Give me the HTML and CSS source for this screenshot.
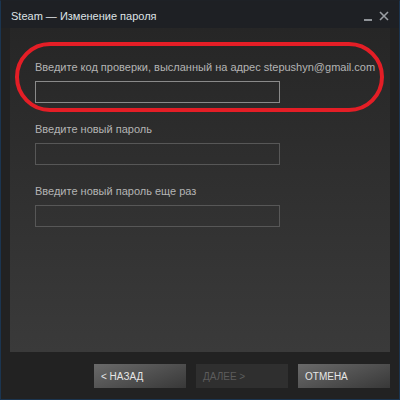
FILE: index.html
```html
<!DOCTYPE html>
<html lang="ru">
<head>
<meta charset="utf-8">
<link rel="stylesheet" href="styles.css">
</head>
<body>
<div class="window">
  <div class="titlebar">
    <span class="title">Steam — Изменение пароля</span>
    <div class="controls">
      <span class="min"></span>
      <svg class="close" width="10" height="10" viewBox="0 0 10 10"><path d="M1 1 L9 9 M9 1 L1 9" stroke="#9a9ea3" stroke-width="1.6"/></svg>
    </div>
  </div>
  <div class="panel">
    <div class="field">
      <div class="label">Введите код проверки, высланный на адрес stepushyn@gmail.com</div>
      <div class="input focus"></div>
    </div>
    <div class="field">
      <div class="label">Введите новый пароль</div>
      <div class="input"></div>
    </div>
    <div class="field">
      <div class="label">Введите новый пароль еще раз</div>
      <div class="input"></div>
    </div>
    <div class="highlight"></div>
  </div>
  <div class="footer">
    <div class="btn">&lt; НАЗАД</div>
    <div class="btn disabled">ДАЛЕЕ &gt;</div>
    <div class="btn">ОТМЕНА</div>
  </div>
</div>
</body>
</html>
```
FILE: styles.css
```css
html, body {
  margin: 0;
  padding: 0;
  background: #222222;
}
.window {
  width: 400px;
  height: 400px;
  box-sizing: border-box;
  border: 1px solid #1b3550;
  border-top-color: #1e2126;
  background: #222222;
  font-family: "Liberation Sans", Arial, sans-serif;
  display: flex;
  flex-direction: column;
}
.titlebar {
  height: 27px;
  background: #1e2024;
  display: flex;
  align-items: center;
  justify-content: space-between;
  padding: 0 10px 0 10px;
}
.title {
  color: #dfe3e6;
  font-size: 11px;
  margin-top: 2px;
}
.controls {
  display: flex;
  align-items: flex-end;
  gap: 7px;
  margin-top: 2px;
}
.min {
  width: 8px;
  height: 2px;
  background: #8f9398;
}
.close {
  display: block;
}
.panel {
  position: relative;
  margin: 0 9px;
  height: 324px;
  box-sizing: border-box;
  padding: 32px 0 0 25px;
  background: linear-gradient(#262626, #3a3a3a);
}
.field {
  margin-bottom: 19px;
}
.label {
  color: #b4b4b4;
  font-size: 11px;
  line-height: 14px;
  margin-bottom: 7px;
  white-space: nowrap;
}
.input {
  width: 245px;
  height: 22px;
  box-sizing: border-box;
  border: 1px solid #575757;
}
.input.focus {
  border-color: #8a8a8a;
}
.highlight {
  position: absolute;
  left: 5px;
  top: 14px;
  width: 369px;
  height: 70px;
  box-sizing: border-box;
  border: 4px solid #e41e26;
  border-radius: 36px;
}
.footer {
  display: flex;
  justify-content: flex-end;
  gap: 10px;
  padding: 12px 9px 0 0;
}
.btn {
  width: 92px;
  height: 24px;
  box-sizing: border-box;
  padding-left: 7px;
  display: flex;
  align-items: center;
  font-size: 10px;
  color: #e6e6e6;
  background: linear-gradient(160deg, #6a6a6a, #383838);
}
.btn.disabled {
  background: #2f2f2f;
  color: #5c5c5c;
}
```
